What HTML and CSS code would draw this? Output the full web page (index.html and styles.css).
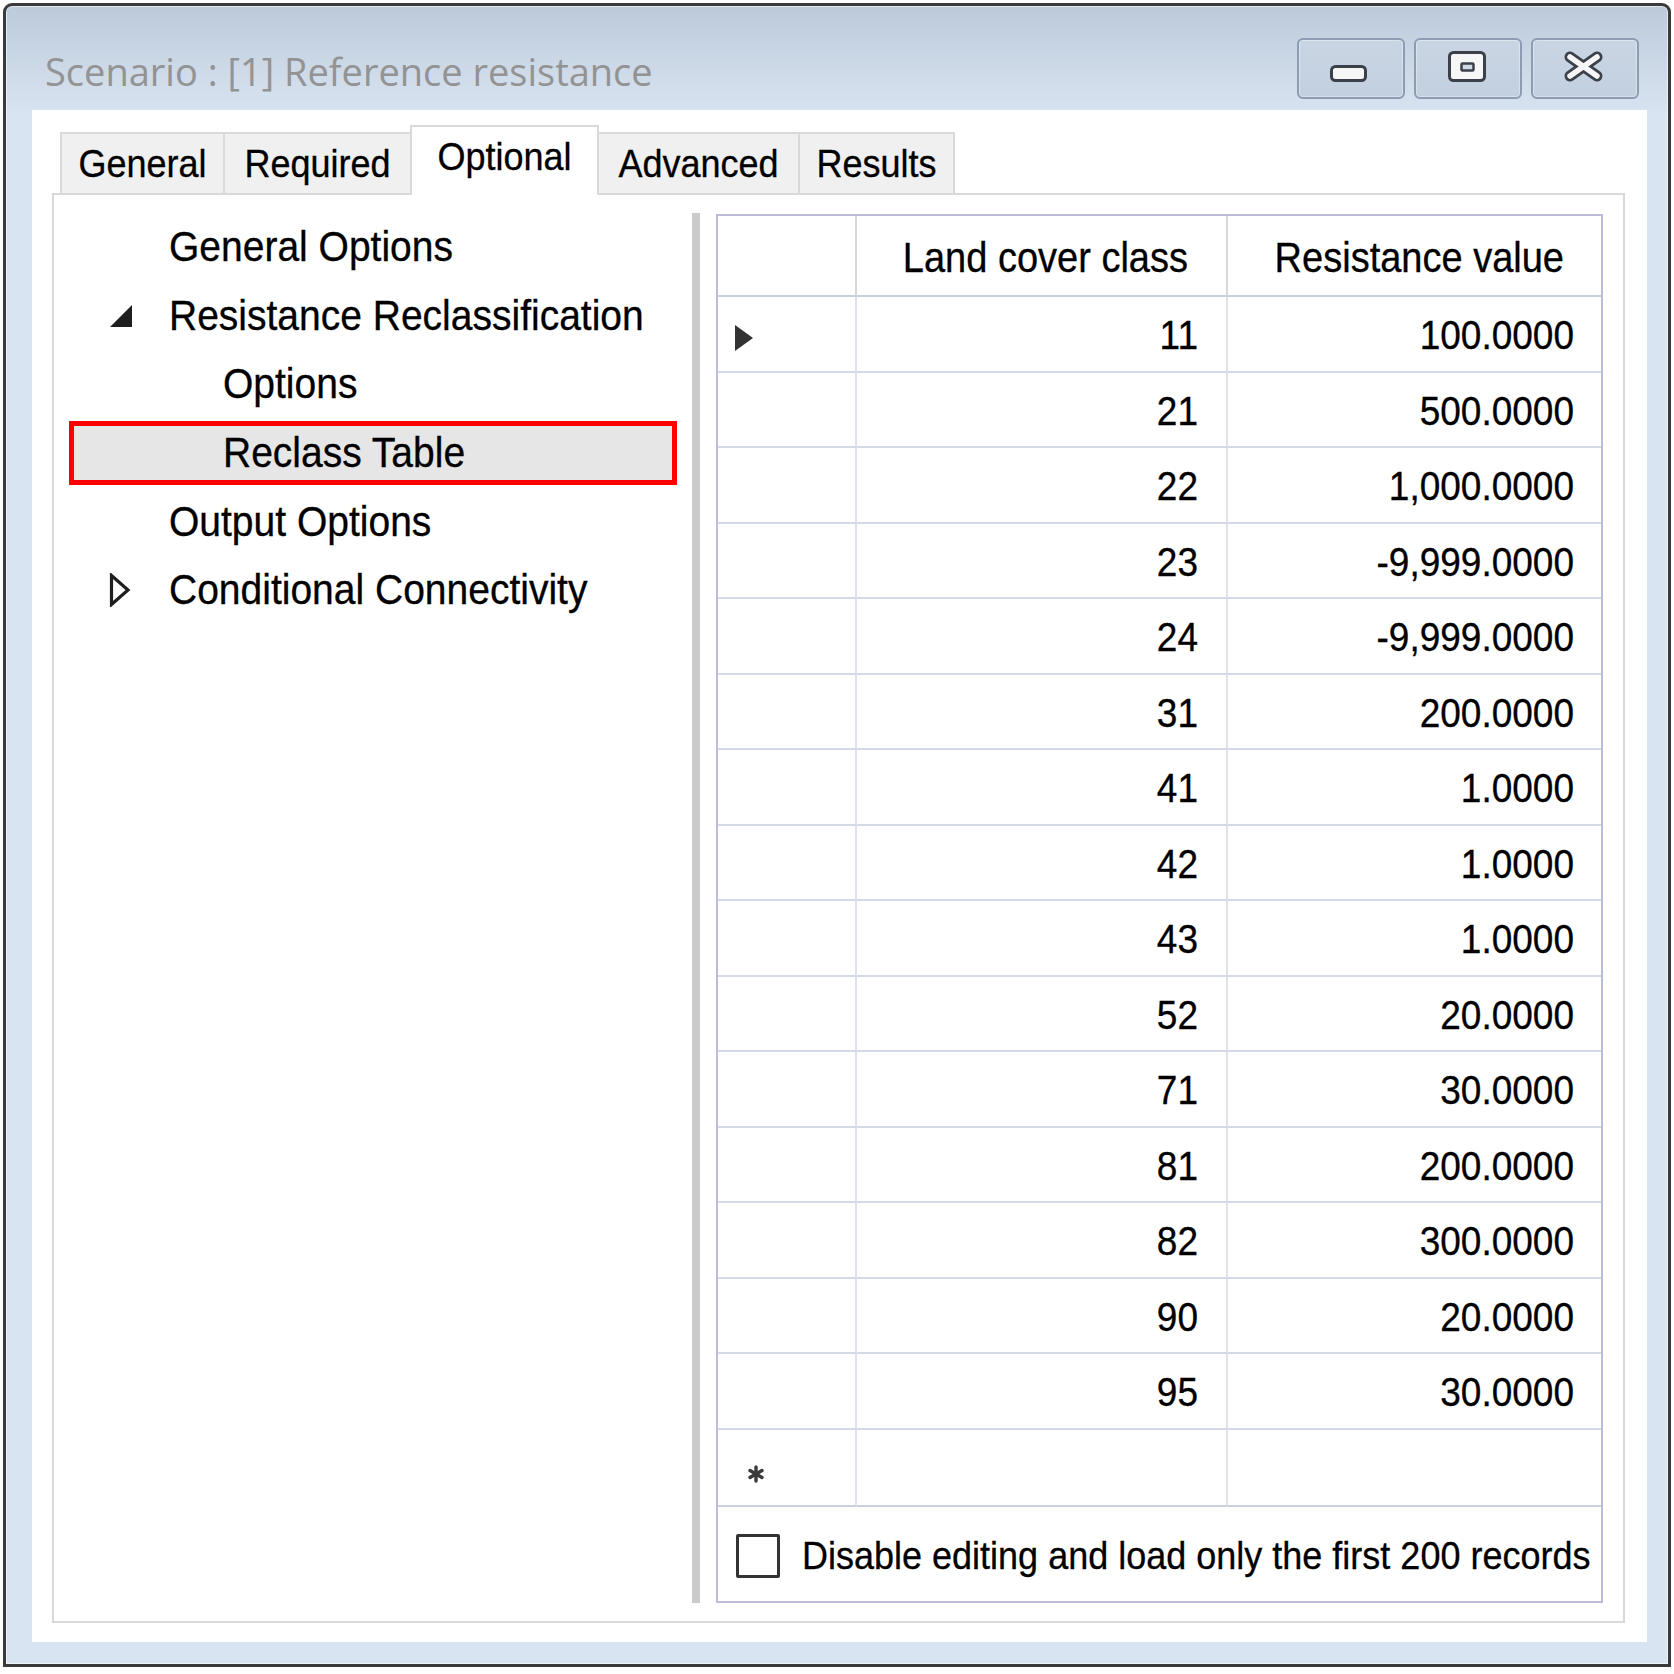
FILE: index.html
```html
<!DOCTYPE html>
<html>
<head>
<meta charset="utf-8">
<link rel="stylesheet" href="styles.css">
</head>
<body>
<div class="window">
  <div class="titlebar">
    <div class="title">Scenario : [1] Reference resistance</div>
    <div class="caption-buttons">
      <div class="cbtn">
        <svg width="108" height="61" viewBox="0 0 108 61"><rect x="34.5" y="28.5" width="34" height="14" rx="4" fill="#f6f6f6" stroke="#3c4049" stroke-width="3"/></svg>
      </div>
      <div class="cbtn">
        <svg width="108" height="61" viewBox="0 0 108 61"><rect x="35.5" y="14.5" width="35" height="28" rx="4" fill="#f6f6f6" stroke="#3c4049" stroke-width="3"/><rect x="47.5" y="25.5" width="12" height="7" rx="1" fill="#d0dae6" stroke="#3c4049" stroke-width="2.5"/></svg>
      </div>
      <div class="cbtn">
        <svg width="108" height="61" viewBox="0 0 108 61"><g stroke-linecap="round"><path d="M39 19 L66 38 M66 19 L39 38" stroke="#3c4049" stroke-width="11"/><path d="M39 19 L66 38 M66 19 L39 38" stroke="#f6f6f6" stroke-width="5.5"/></g></svg>
      </div>
    </div>
  </div>
  <div class="client">
    <div class="tabs">
      <div class="tab t1"><span class="tx">General</span></div>
      <div class="tab t2"><span class="tx">Required</span></div>
      <div class="tab t3 active"><span class="tx">Optional</span></div>
      <div class="tab t4"><span class="tx">Advanced</span></div>
      <div class="tab t5"><span class="tx">Results</span></div>
    </div>
    <div class="panel">
      <div class="tree">
        <div class="node l1"><span class="twisty"></span><span class="tx">General Options</span></div>
        <div class="node l1"><span class="twisty"><svg width="24" height="24" viewBox="0 0 24 24"><path d="M23 1 L23 23 L1 23 Z" fill="#1e1e1e"/></svg></span><span class="tx">Resistance Reclassification</span></div>
        <div class="node l2"><span class="tx">Options</span></div>
        <div class="node sel"><div class="sel-box"><span class="tx">Reclass Table</span></div></div>
        <div class="node l1"><span class="twisty"></span><span class="tx">Output Options</span></div>
        <div class="node l1"><span class="twisty"><svg width="22" height="34" viewBox="0 0 22 34"><path d="M2.5 2.5 L2.5 31.5 L19 17 Z" fill="#fff" stroke="#1e1e1e" stroke-width="3.2" stroke-linejoin="miter"/></svg></span><span class="tx">Conditional Connectivity</span></div>
      </div>
      <div class="splitter"></div>
      <div class="gridbox">
        <div class="grid">
          <div class="cell hd rh"></div>
          <div class="cell hd"><span class="tx">Land cover class</span></div>
          <div class="cell hd last"><span class="tx">Resistance value</span></div>

          <div class="cell rh"><svg class="cur" width="19" height="26" viewBox="0 0 19 26"><path d="M0 0 L18 13 L0 26 Z" fill="#333"/></svg></div>
          <div class="cell"><span class="tx">11</span></div><div class="cell last"><span class="tx">100.0000</span></div>
          <div class="cell rh"></div><div class="cell"><span class="tx">21</span></div><div class="cell last"><span class="tx">500.0000</span></div>
          <div class="cell rh"></div><div class="cell"><span class="tx">22</span></div><div class="cell last"><span class="tx">1,000.0000</span></div>
          <div class="cell rh"></div><div class="cell"><span class="tx">23</span></div><div class="cell last"><span class="tx">-9,999.0000</span></div>
          <div class="cell rh"></div><div class="cell"><span class="tx">24</span></div><div class="cell last"><span class="tx">-9,999.0000</span></div>
          <div class="cell rh"></div><div class="cell"><span class="tx">31</span></div><div class="cell last"><span class="tx">200.0000</span></div>
          <div class="cell rh"></div><div class="cell"><span class="tx">41</span></div><div class="cell last"><span class="tx">1.0000</span></div>
          <div class="cell rh"></div><div class="cell"><span class="tx">42</span></div><div class="cell last"><span class="tx">1.0000</span></div>
          <div class="cell rh"></div><div class="cell"><span class="tx">43</span></div><div class="cell last"><span class="tx">1.0000</span></div>
          <div class="cell rh"></div><div class="cell"><span class="tx">52</span></div><div class="cell last"><span class="tx">20.0000</span></div>
          <div class="cell rh"></div><div class="cell"><span class="tx">71</span></div><div class="cell last"><span class="tx">30.0000</span></div>
          <div class="cell rh"></div><div class="cell"><span class="tx">81</span></div><div class="cell last"><span class="tx">200.0000</span></div>
          <div class="cell rh"></div><div class="cell"><span class="tx">82</span></div><div class="cell last"><span class="tx">300.0000</span></div>
          <div class="cell rh"></div><div class="cell"><span class="tx">90</span></div><div class="cell last"><span class="tx">20.0000</span></div>
          <div class="cell rh"></div><div class="cell"><span class="tx">95</span></div><div class="cell last"><span class="tx">30.0000</span></div>

          <div class="cell rh newrow"><svg class="star" width="16" height="18" viewBox="0 0 16 18"><g stroke="#3a3a3a" stroke-width="3.4" stroke-linecap="round"><path d="M8 2 L8 16"/><path d="M2 5.5 L14 12.5"/><path d="M14 5.5 L2 12.5"/></g></svg></div>
          <div class="cell newrow"></div><div class="cell last newrow"></div>
        </div>
        <div class="chkrow">
          <span class="chk"></span>
          <span class="tx chklabel">Disable editing and load only the first 200 records</span>
        </div>
      </div>
    </div>
  </div>
</div>
</body>
</html>
```

FILE: styles.css
```css
html, body {
  margin: 0;
  padding: 0;
  background: #ffffff;
}
body {
  width: 1674px;
  height: 1674px;
  overflow: hidden;
  font-family: "Liberation Sans", Arial, sans-serif;
  color: #000;
}
.tx {
  display: inline-block;
  transform: scaleY(1.1);
  -webkit-text-stroke: 0.3px #000;
}
.window {
  margin: 3px 0 0 3px;
  width: 1668px;
  height: 1664px;
  box-sizing: border-box;
  border: 3px solid #3a3a3a;
  border-radius: 9px 9px 0 0;
  background: linear-gradient(to bottom, #bccada 0px, #cfdbe9 70px, #d8e4f2 110px, #d8e4f2 100%);
  box-shadow: inset 0 0 0 1px rgba(255,255,255,0.55);
  display: flex;
  flex-direction: column;
}
.titlebar {
  height: 104px;
  display: flex;
  align-items: flex-start;
  flex: none;
}
.title {
  flex: 1;
  margin-top: 40px;
  padding-left: 39px;
  line-height: 50px;
  font-family: "Open Sans", "Noto Sans", sans-serif;
  font-size: 38px;
  color: #939393;
  white-space: nowrap;
}
.caption-buttons {
  display: flex;
  gap: 9px;
  margin-top: 32px;
  margin-right: 29px;
}
.cbtn {
  width: 108px;
  height: 61px;
  box-sizing: border-box;
  border: 2px solid #8d9bb3;
  border-radius: 6px;
  background: linear-gradient(to bottom, #c9d5e3, #c3d0df);
  box-shadow: inset 0 0 0 1px rgba(255,255,255,0.35);
  position: relative;
  overflow: hidden;
}
.cbtn svg {
  position: absolute;
  left: -2px;
  top: -2px;
}
.client {
  margin: 0 21px 22px 26px;
  flex: 1;
  background: #ffffff;
  padding: 15px 22px 19px 20px;
  display: flex;
  flex-direction: column;
}
.tabs {
  height: 70px;
  margin-bottom: -2px;
  display: flex;
  align-items: flex-end;
  padding-left: 8px;
  position: relative;
  z-index: 1;
  flex: none;
}
.tab {
  height: 61px;
  margin-bottom: 2px;
  box-sizing: border-box;
  border: 2px solid #d9d9d9;
  border-bottom: none;
  background: #f0f0f0;
  display: flex;
  align-items: center;
  justify-content: center;
  font-size: 36px;
  margin-left: -2px;
  padding-top: 0;
}
.t1 { width: 165px; margin-left: 0; }
.t2 { width: 189px; }
.t3 { width: 189px; }
.t4 { width: 203px; }
.t5 { width: 157px; }
.tab.active {
  height: 70px;
  margin-bottom: 0;
  background: #ffffff;
  padding-top: 0;
  padding-bottom: 8px;
  position: relative;
  z-index: 2;
}
.panel {
  flex: 1;
  box-sizing: border-box;
  border: 2px solid #d9d9d9;
  padding: 18px 20px 18px 0;
  display: flex;
  min-height: 0;
}
.tree {
  width: 638px;
  flex: none;
  font-size: 39px;
}
.node {
  height: 68.6px;
  display: flex;
  align-items: center;
  white-space: nowrap;
}
.node.l1 { padding-left: 55px; }
.node.l2 { padding-left: 169px; }
.twisty {
  width: 60px;
  flex: none;
  display: flex;
  align-items: center;
}
.twisty svg { display: block; }
.sel-box {
  margin-left: 15px;
  width: 608px;
  height: 64px;
  box-sizing: border-box;
  border: 5px solid #ff0000;
  background: #e6e6e6;
  display: flex;
  align-items: center;
  padding-left: 149px;
}
.splitter {
  width: 8px;
  flex: none;
  background: #cbcbcb;
}
.gridbox {
  margin-left: 16px;
  margin-top: 1px;
  flex: 1;
  box-sizing: border-box;
  border: 2px solid #bcbcd8;
  display: flex;
  flex-direction: column;
}
.grid {
  display: grid;
  grid-template-columns: 139px 371px 1fr;
  grid-template-rows: 81px repeat(15, 75.5px) 77px;
  font-size: 37px;
}
.cell {
  box-sizing: border-box;
  border-right: 2px solid #dde2ed;
  border-bottom: 2px solid #d3d9e6;
  display: flex;
  align-items: center;
  justify-content: flex-end;
  padding-right: 28px;
  padding-top: 5px;
  white-space: nowrap;
}
.cell.last {
  border-right: none;
  padding-right: 27px;
}
.cell.hd {
  font-size: 38px;
  border-right-color: #d8d8d8;
  border-bottom-color: #c9d0de;
  padding-right: 38px;
}
.cell.hd.last { padding-right: 37px; }
.cell.rh {
  justify-content: flex-start;
  padding-right: 0;
  padding-left: 17px;
  padding-top: 8px;
}
.cell.newrow {
  border-bottom-color: #c9d0de;
}
.cur { display: block; }
.star {
  display: block;
  margin-left: 13px;
  margin-top: 6px;
}
.chkrow {
  flex: 1;
  display: flex;
  align-items: center;
  padding-left: 18px;
  padding-top: 4px;
  font-size: 36px;
  white-space: nowrap;
}
.chk {
  width: 44px;
  height: 44px;
  box-sizing: border-box;
  border: 3px solid #333333;
  border-radius: 2px;
  background: #fff;
  flex: none;
  margin-right: 22px;
  -webkit-text-stroke: 0;
}
```
